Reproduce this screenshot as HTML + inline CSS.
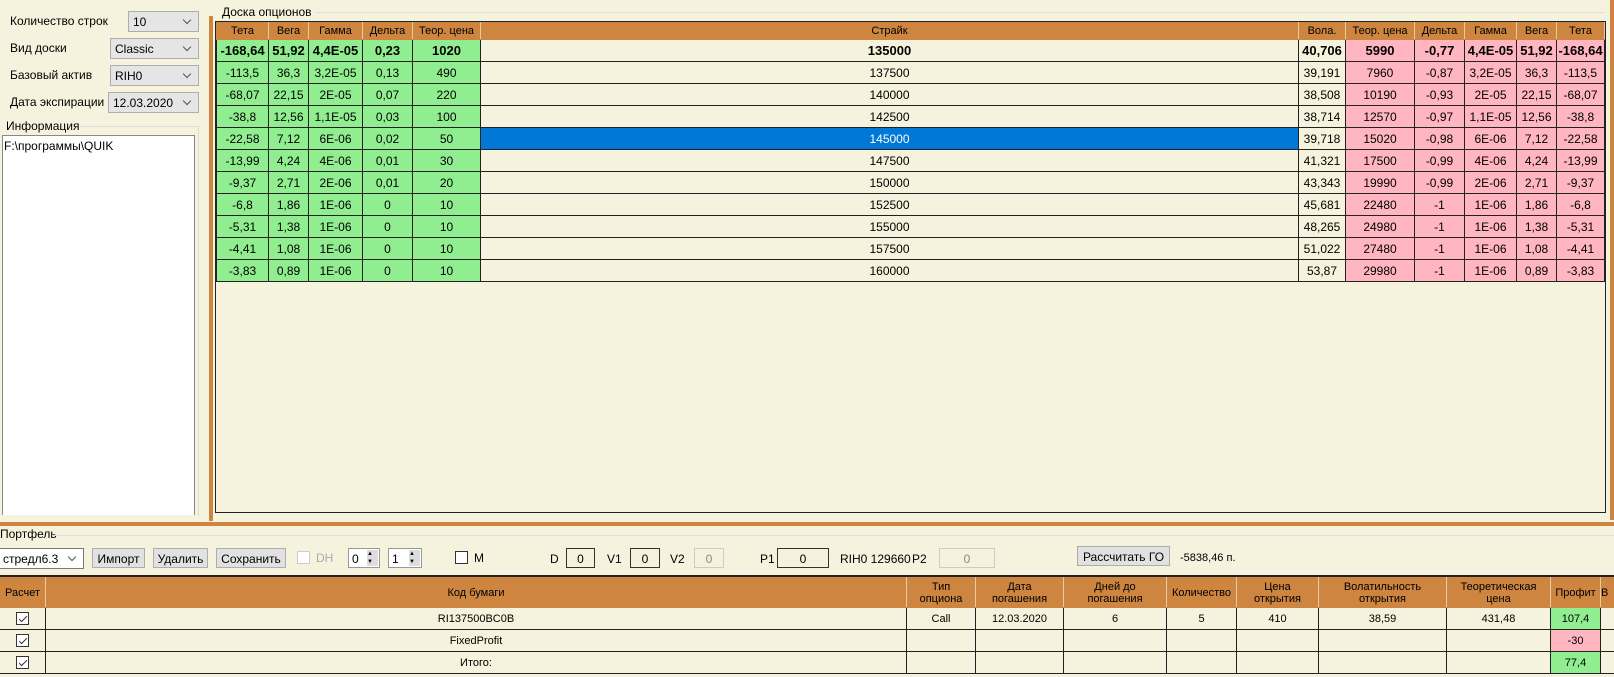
<!DOCTYPE html>
<html><head><meta charset="utf-8"><style>
*{box-sizing:border-box;margin:0;padding:0}
body{width:1614px;height:677px;overflow:hidden;background:#F5F3DD;font-family:"Liberation Sans",sans-serif;font-size:12px;color:#000;position:relative}
.a{position:absolute}
.lbl{position:absolute;font-size:12px}
.combo{position:absolute;background:#E5E5E5;border:1px solid #ADADAD;height:21px;font-size:12px;padding:3px 0 0 4px}
.combo:after{content:"";position:absolute;right:8px;top:5px;width:5px;height:5px;border-right:1px solid #555;border-bottom:1px solid #555;transform:rotate(45deg)}
table{border-collapse:collapse;table-layout:fixed;position:absolute}
td{border:1px solid #222;text-align:center;overflow:hidden;white-space:nowrap;padding:0}
.th td{background:#CD853F;border-color:#CD853F;border-right:1px solid #E8C9A0;font-size:11px;height:17px}
.g{background:#90EE90}.p{background:#FFB6C1}.c{background:#F5F3DD}
.b td{font-weight:bold;font-size:13px}
#board td{height:22px}
#board .th td{height:17px;line-height:15px}
.btn{position:absolute;background:#E1E1E1;border:1px solid #ADADAD;height:20px;font-size:12px;text-align:center;padding-top:3px}
.box{position:absolute;border:1px solid #333;height:20px;background:#F5F3DD;text-align:center;padding-top:3px;font-size:12px}
.chk{display:inline-block;width:13px;height:13px;border:1px solid #333;background:#fff;position:relative;vertical-align:middle}
.chk:after{content:"";position:absolute;left:4px;top:1px;width:3px;height:7px;border-right:1px solid #333;border-bottom:1px solid #333;transform:rotate(45deg)}
#pf td{height:22px;font-size:11px}
#pf .th td{height:30px;font-size:11px;line-height:12px;white-space:normal;background:#CD853F;border-color:#CD853F;border-right:1px solid #E8C9A0}
</style></head><body>
<div class="lbl" style="left:10px;top:14px">Количество строк</div>
<div class="combo" style="left:128px;top:11px;width:71px">10</div>
<div class="lbl" style="left:10px;top:41px">Вид доски</div>
<div class="combo" style="left:110px;top:38px;width:89px">Classic</div>
<div class="lbl" style="left:10px;top:68px">Базовый актив</div>
<div class="combo" style="left:110px;top:65px;width:89px">RIH0</div>
<div class="lbl" style="left:10px;top:95px">Дата экспирации</div>
<div class="combo" style="left:108px;top:92px;width:91px">12.03.2020</div>
<div class="lbl" style="left:6px;top:119px">Информация</div>
<div class="a" style="left:80px;top:126px;width:118px;height:1px;background:#ddd"></div>
<div class="a" style="left:2px;top:135px;width:193px;height:380px;background:#fff;border:1px solid #888;border-bottom:none;padding:3px 1px;font-size:12px">F:\программы\QUIK</div>
<div class="a" style="left:198px;top:126px;width:1px;height:390px;background:#ddd"></div>
<div class="a" style="left:209px;top:16px;width:4px;height:505px;background:#CD853F"></div>
<div class="a" style="left:1610px;top:0;width:4px;height:520px;background:#CD853F"></div>
<div class="lbl" style="left:222px;top:5px">Доска опционов</div>
<div class="a" style="left:315px;top:12px;width:1290px;height:1px;background:#ddd"></div>
<div class="a" style="left:215px;top:21px;width:1391px;height:492px;border:1px solid #222"></div>
<table id="board" style="left:216px;top:22px;width:1388px">
<colgroup><col style="width:52px"><col style="width:40px"><col style="width:54px"><col style="width:50px"><col style="width:68px"><col style="width:818px"><col style="width:47px"><col style="width:69px"><col style="width:50px"><col style="width:52px"><col style="width:40px"><col style="width:48px"></colgroup>
<tr class="th"><td>Тета</td><td>Вега</td><td>Гамма</td><td>Дельта</td><td>Теор. цена</td><td>Страйк</td><td>Вола.</td><td>Теор. цена</td><td>Дельта</td><td>Гамма</td><td>Вега</td><td>Тета</td></tr>
<tr class="b"><td class="g">-168,64</td><td class="g">51,92</td><td class="g">4,4E-05</td><td class="g">0,23</td><td class="g">1020</td><td class="c">135000</td><td class="c">40,706</td><td class="p">5990</td><td class="p">-0,77</td><td class="p">4,4E-05</td><td class="p">51,92</td><td class="p">-168,64</td></tr>
<tr><td class="g">-113,5</td><td class="g">36,3</td><td class="g">3,2E-05</td><td class="g">0,13</td><td class="g">490</td><td class="c">137500</td><td class="c">39,191</td><td class="p">7960</td><td class="p">-0,87</td><td class="p">3,2E-05</td><td class="p">36,3</td><td class="p">-113,5</td></tr>
<tr><td class="g">-68,07</td><td class="g">22,15</td><td class="g">2E-05</td><td class="g">0,07</td><td class="g">220</td><td class="c">140000</td><td class="c">38,508</td><td class="p">10190</td><td class="p">-0,93</td><td class="p">2E-05</td><td class="p">22,15</td><td class="p">-68,07</td></tr>
<tr><td class="g">-38,8</td><td class="g">12,56</td><td class="g">1,1E-05</td><td class="g">0,03</td><td class="g">100</td><td class="c">142500</td><td class="c">38,714</td><td class="p">12570</td><td class="p">-0,97</td><td class="p">1,1E-05</td><td class="p">12,56</td><td class="p">-38,8</td></tr>
<tr><td class="g">-22,58</td><td class="g">7,12</td><td class="g">6E-06</td><td class="g">0,02</td><td class="g">50</td><td style="background:#0078D7;color:#fff">145000</td><td class="c">39,718</td><td class="p">15020</td><td class="p">-0,98</td><td class="p">6E-06</td><td class="p">7,12</td><td class="p">-22,58</td></tr>
<tr><td class="g">-13,99</td><td class="g">4,24</td><td class="g">4E-06</td><td class="g">0,01</td><td class="g">30</td><td class="c">147500</td><td class="c">41,321</td><td class="p">17500</td><td class="p">-0,99</td><td class="p">4E-06</td><td class="p">4,24</td><td class="p">-13,99</td></tr>
<tr><td class="g">-9,37</td><td class="g">2,71</td><td class="g">2E-06</td><td class="g">0,01</td><td class="g">20</td><td class="c">150000</td><td class="c">43,343</td><td class="p">19990</td><td class="p">-0,99</td><td class="p">2E-06</td><td class="p">2,71</td><td class="p">-9,37</td></tr>
<tr><td class="g">-6,8</td><td class="g">1,86</td><td class="g">1E-06</td><td class="g">0</td><td class="g">10</td><td class="c">152500</td><td class="c">45,681</td><td class="p">22480</td><td class="p">-1</td><td class="p">1E-06</td><td class="p">1,86</td><td class="p">-6,8</td></tr>
<tr><td class="g">-5,31</td><td class="g">1,38</td><td class="g">1E-06</td><td class="g">0</td><td class="g">10</td><td class="c">155000</td><td class="c">48,265</td><td class="p">24980</td><td class="p">-1</td><td class="p">1E-06</td><td class="p">1,38</td><td class="p">-5,31</td></tr>
<tr><td class="g">-4,41</td><td class="g">1,08</td><td class="g">1E-06</td><td class="g">0</td><td class="g">10</td><td class="c">157500</td><td class="c">51,022</td><td class="p">27480</td><td class="p">-1</td><td class="p">1E-06</td><td class="p">1,08</td><td class="p">-4,41</td></tr>
<tr><td class="g">-3,83</td><td class="g">0,89</td><td class="g">1E-06</td><td class="g">0</td><td class="g">10</td><td class="c">160000</td><td class="c">53,87</td><td class="p">29980</td><td class="p">-1</td><td class="p">1E-06</td><td class="p">0,89</td><td class="p">-3,83</td></tr>
</table>
<div class="a" style="left:0;top:522px;width:1614px;height:4px;background:#CD853F"></div>
<div class="lbl" style="left:0;top:527px">Портфель</div>
<div class="a" style="left:52px;top:535px;width:1562px;height:1px;background:#ddd"></div>
<div class="combo" style="left:-2px;top:548px;width:86px;background:#fff;border-color:#7A7A7A">стредл6.3</div>
<div class="btn" style="left:92px;top:548px;width:53px">Импорт</div>
<div class="btn" style="left:153px;top:548px;width:55px">Удалить</div>
<div class="btn" style="left:216px;top:548px;width:70px">Сохранить</div>
<div class="a" style="left:297px;top:551px;width:13px;height:13px;border:1px solid #ccc;background:#fff"></div>
<div class="lbl" style="left:316px;top:551px;color:#aaa">DH</div>
<div class="box" style="left:348px;top:548px;width:32px;text-align:left;padding-left:3px;background:#fff;border-color:#999">0<span style="position:absolute;right:1px;top:1px;width:11px;height:16px;background:#ddd;font-size:6px;line-height:8px">▲<br>▼</span></div>
<div class="box" style="left:388px;top:548px;width:34px;text-align:left;padding-left:3px;background:#fff;border-color:#999">1<span style="position:absolute;right:1px;top:1px;width:11px;height:16px;background:#ddd;font-size:6px;line-height:8px">▲<br>▼</span></div>
<div class="a" style="left:455px;top:551px;width:13px;height:13px;border:1px solid #333;background:#fff"></div>
<div class="lbl" style="left:474px;top:551px">M</div>
<div class="lbl" style="left:550px;top:552px">D</div>
<div class="box" style="left:566px;top:548px;width:29px">0</div>
<div class="lbl" style="left:607px;top:552px">V1</div>
<div class="box" style="left:630px;top:548px;width:30px">0</div>
<div class="lbl" style="left:670px;top:552px">V2</div>
<div class="box" style="left:694px;top:548px;width:30px;border-color:#ccc;color:#888">0</div>
<div class="lbl" style="left:760px;top:552px">P1</div>
<div class="box" style="left:777px;top:548px;width:52px">0</div>
<div class="lbl" style="left:840px;top:552px">RIH0 129660</div>
<div class="lbl" style="left:912px;top:552px">P2</div>
<div class="box" style="left:939px;top:548px;width:56px;border-color:#ccc;color:#888">0</div>
<div class="btn" style="left:1077px;top:546px;width:93px">Рассчитать ГО</div>
<div class="lbl" style="left:1180px;top:552px;font-size:11px">-5838,46 п.</div>
<div class="a" style="left:0;top:575px;width:1614px;height:2px;background:#222"></div>
<table id="pf" style="left:-1px;top:577px;width:1630px">
<colgroup><col style="width:46px"><col style="width:861px"><col style="width:69px"><col style="width:88px"><col style="width:103px"><col style="width:70px"><col style="width:82px"><col style="width:128px"><col style="width:104px"><col style="width:50px"><col style="width:29px"></colgroup>
<tr class="th"><td>Расчет</td><td>Код бумаги</td><td>Тип<br>опциона</td><td>Дата<br>погашения</td><td>Дней до<br>погашения</td><td>Количество</td><td>Цена<br>открытия</td><td>Волатильность<br>открытия</td><td>Теоретическая<br>цена</td><td>Профит</td><td style="text-align:left">В</td></tr>
<tr><td><span class="chk"></span></td><td>RI137500BC0B</td><td>Call</td><td>12.03.2020</td><td>6</td><td>5</td><td>410</td><td>38,59</td><td>431,48</td><td class="g">107,4</td><td></td></tr>
<tr><td><span class="chk"></span></td><td>FixedProfit</td><td></td><td></td><td></td><td></td><td></td><td></td><td></td><td class="p">-30</td><td></td></tr>
<tr><td><span class="chk"></span></td><td>Итого:</td><td></td><td></td><td></td><td></td><td></td><td></td><td></td><td class="g">77,4</td><td></td></tr>
</table>
</body></html>
